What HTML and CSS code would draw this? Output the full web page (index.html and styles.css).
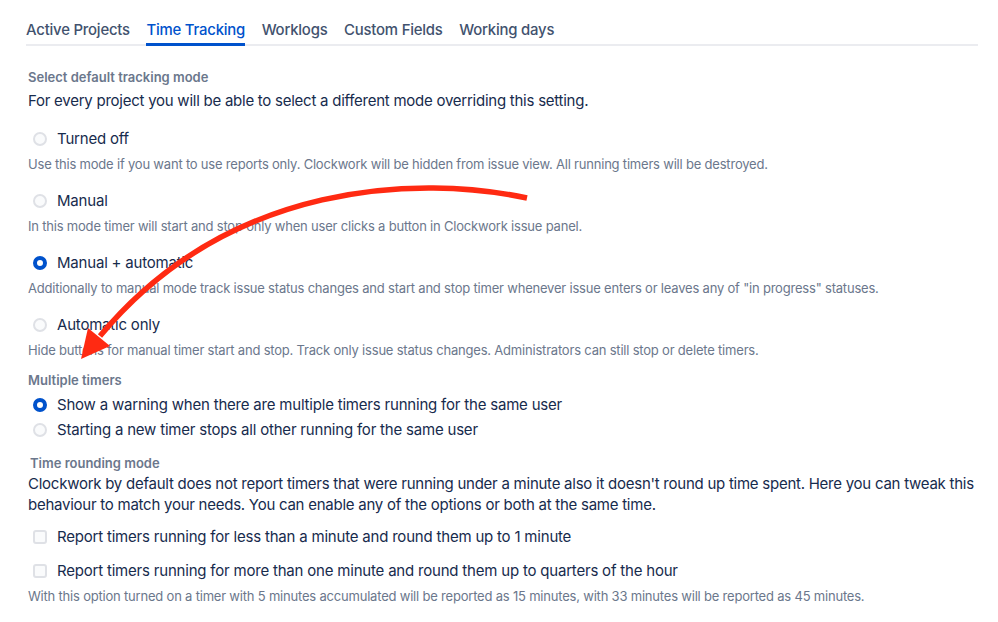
FILE: index.html
```html
<!DOCTYPE html>
<html lang="en">
<head>
    <meta charset="UTF-8">
    <meta name="viewport" content="width=device-width, initial-scale=1.0">
    <title>Clockwork settings</title>
    <link rel="stylesheet" href="styles.css">
</head>
<body>
    <div id="page">
        <!-- tabs -->
        <nav class="tabs">
            <a class="tab" href="javascript:;">Active Projects</a>
            <a class="tab active" href="javascript:;">Time Tracking</a>
            <a class="tab" href="javascript:;">Worklogs</a>
            <a class="tab" href="javascript:;">Custom Fields</a>
            <a class="tab" href="javascript:;">Working days</a>
        </nav>

        <!-- default tracking mode -->
        <section class="group">
            <h4 class="group-title">Select default tracking mode</h4>
            <p class="lead">For every project you will be able to select a different mode overriding this setting.</p>

            <div class="option">
                <label class="choice"><span class="radio"></span>Turned off</label>
                <p class="hint">Use this mode if you want to use reports only. Clockwork will be hidden from issue view. All running timers will be destroyed.</p>
            </div>
            <div class="option">
                <label class="choice"><span class="radio"></span>Manual</label>
                <p class="hint">In this mode timer will start and stop only when user clicks a button in Clockwork issue panel.</p>
            </div>
            <div class="option">
                <label class="choice"><span class="radio checked"></span>Manual + automatic</label>
                <p class="hint">Additionally to manual mode track issue status changes and start and stop timer whenever issue enters or leaves any of "in progress" statuses.</p>
            </div>
            <div class="option">
                <label class="choice"><span class="radio"></span>Automatic only</label>
                <p class="hint">Hide buttons for manual timer start and stop. Track only issue status changes. Administrators can still stop or delete timers.</p>
            </div>
        </section>

        <!-- multiple timers -->
        <section class="group timers">
            <h4 class="group-title">Multiple timers</h4>
            <div class="stack">
                <label class="choice"><span class="radio checked"></span>Show a warning when there are multiple timers running for the same user</label>
                <label class="choice"><span class="radio"></span>Starting a new timer stops all other running for the same user</label>
            </div>
        </section>

        <!-- rounding -->
        <section class="group rounding">
            <h4 class="group-title">Time rounding mode</h4>
            <p class="lead">Clockwork by default does not report timers that were running under a minute also it doesn't round up time spent. Here you can tweak this behaviour to match your needs. You can enable any of the options or both at the same time.</p>
            <label class="choice check-row"><span class="checkbox"></span>Report timers running for less than a minute and round them up to 1 minute</label>
            <div class="option check-row">
                <label class="choice"><span class="checkbox"></span>Report timers running for more than one minute and round them up to quarters of the hour</label>
                <p class="hint">With this option turned on a timer with 5 minutes accumulated will be reported as 15 minutes, with 33 minutes will be reported as 45 minutes.</p>
            </div>
        </section>

        <!-- annotation arrow drawn over the form -->
        <svg class="annotation" width="998" height="622" viewBox="0 0 998 622">
            <path d="M527 198 C420 175 230 180 100 336" fill="none" stroke="#ff2a12" stroke-width="5.5"/>
            <polygon points="81,359 110,346 88,328" fill="#ff2a12"/>
        </svg>
    </div>
</body>
</html>
```

FILE: styles.css
```css
*{
    margin: 0;
    padding: 0;
    box-sizing: border-box;
}

body{
    background-color: #fff;
    color: #172b4d;
    font-family: Inter, "Noto Sans", sans-serif;
    letter-spacing: -0.2px;
}

#page{
    position: relative;
    width: 998px;
    height: 622px;
    padding: 20px 20px 0 26px;
    overflow: hidden;
}

/* tabs */
.tabs{
    display: flex;
    gap: 16.5px;
    border-bottom: 2px solid #ebecf0;
}
.tab{
    font-size: 14.9px;
    font-weight: 500;
    line-height: 20px;
    letter-spacing: -0.2px;
    color: #42526e;
    text-decoration: none;
    padding-bottom: 3px;
    border-bottom: 3px solid transparent;
    margin-bottom: -2px;
}
.tab.active{
    color: #0052cc;
    border-bottom-color: #0052cc;
}

/* groups */
.group{
    padding-left: 2px;
}
.group:first-of-type{
    margin-top: 23px;
}
.group-title{
    font-size: 13px;
    font-weight: 600;
    line-height: 16px;
    letter-spacing: 0;
    color: #6b778c;
}
.lead{
    font-size: 15px;
    line-height: 20px;
    letter-spacing: -0.25px;
    margin-top: 6px;
}

.option{
    margin-top: 18px;
}
.choice{
    display: flex;
    align-items: center;
    gap: 10px;
    font-size: 15px;
    line-height: 20px;
    padding-left: 5px;
}
.hint{
    font-size: 13px;
    line-height: 18px;
    color: #6b778c;
    margin-top: 6px;
}

/* radio and checkbox */
.radio,
.checkbox{
    flex: none;
    width: 14px;
    height: 14px;
    border: 2px solid #dfe1e6;
    background-color: #fafbfc;
}
.radio{
    border-radius: 50%;
}
.radio.checked{
    border: 4.5px solid #0052cc;
    background-color: #fff;
}
.checkbox{
    border-radius: 3px;
}

/* multiple timers */
.timers{
    margin-top: 13px;
}
.stack{
    display: flex;
    flex-direction: column;
    gap: 5px;
    margin-top: 7px;
}

/* rounding */
.rounding{
    margin-top: 15px;
}
.rounding .group-title{
    padding-left: 2px;
}
.rounding .lead{
    line-height: 21px;
    margin-top: 2px;
}
.rounding > .check-row{
    margin-top: 12px;
}
.rounding .option.check-row{
    margin-top: 14px;
}

/* annotation */
.annotation{
    position: absolute;
    left: 0;
    top: 0;
    pointer-events: none;
}
```
